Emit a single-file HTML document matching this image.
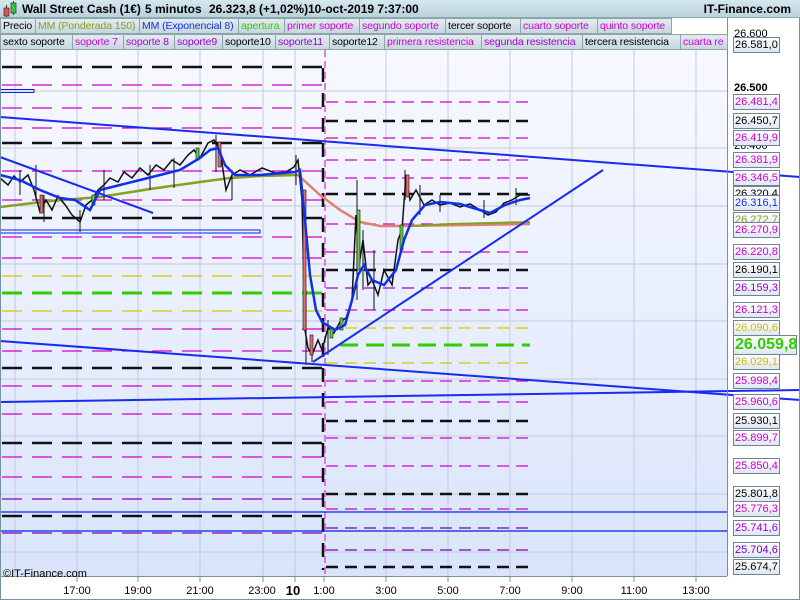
<!DOCTYPE html>
<html><head><meta charset="utf-8"><style>
*{margin:0;padding:0;box-sizing:border-box}
body{width:800px;height:600px;overflow:hidden;background:#fff;font-family:"Liberation Sans",sans-serif;position:relative}
#hdr{position:absolute;left:0;top:0;width:800px;height:18px;background:linear-gradient(#d6e7ee,#b9d2dc);border-bottom:1px solid #8aa;font-weight:bold;font-size:12px;line-height:18px;white-space:nowrap}
#hdr span{white-space:nowrap}
.leg{position:absolute;height:16px;font-size:10.5px;line-height:15px;background:linear-gradient(#e2ecf0,#c6d7de);border:1px solid #8fa3ad;white-space:nowrap;overflow:hidden;padding-left:2px;letter-spacing:-0.1px}
.lb{position:absolute;left:733px;width:47px;height:16px;font-size:11px;line-height:14px;border:1px solid #6f8593;background:linear-gradient(#fff,#dfe7f2);padding-left:1px;white-space:nowrap}
.pt{position:absolute;left:734px;font-size:11px}
.xl{position:absolute;top:585px;font-size:11px;transform:translateX(-50%)}
</style></head><body>
<svg width="800" height="600" style="position:absolute;left:0;top:0">
<defs><linearGradient id="bg" x1="0" y1="0" x2="0" y2="1"><stop offset="0" stop-color="#f8f9ff"/><stop offset="1" stop-color="#d9e4fb"/></linearGradient></defs>
<rect x="0" y="50" width="727" height="526" fill="url(#bg)"/>
<g stroke="#c3cada" stroke-width="1">
<line x1="15" y1="50" x2="15" y2="576"/><line x1="77" y1="50" x2="77" y2="576"/><line x1="138" y1="50" x2="138" y2="576"/><line x1="200" y1="50" x2="200" y2="576"/><line x1="263" y1="50" x2="263" y2="576"/><line x1="295" y1="50" x2="295" y2="576"/><line x1="386" y1="50" x2="386" y2="576"/><line x1="448" y1="50" x2="448" y2="576"/><line x1="510" y1="50" x2="510" y2="576"/><line x1="572" y1="50" x2="572" y2="576"/><line x1="634" y1="50" x2="634" y2="576"/><line x1="696" y1="50" x2="696" y2="576"/>
<line x1="0" y1="91" x2="727" y2="91"/><line x1="0" y1="148" x2="727" y2="148"/><line x1="0" y1="206" x2="727" y2="206"/><line x1="0" y1="264" x2="727" y2="264"/><line x1="0" y1="321" x2="727" y2="321"/><line x1="0" y1="379" x2="727" y2="379"/><line x1="0" y1="436" x2="727" y2="436"/><line x1="0" y1="494" x2="727" y2="494"/><line x1="0" y1="552" x2="727" y2="552"/>
</g>
<g stroke-dasharray="20,10" stroke="#111" stroke-width="2.5">
<line x1="2" y1="67" x2="322" y2="67"/><line x1="2" y1="143" x2="322" y2="143"/><line x1="2" y1="218" x2="322" y2="218"/><line x1="2" y1="368" x2="322" y2="368"/><line x1="2" y1="443" x2="322" y2="443"/><line x1="2" y1="516" x2="322" y2="516"/>
</g>
<g stroke-dasharray="20,10" stroke="#d000d0" stroke-width="1.2">
<line x1="2" y1="85" x2="322" y2="85"/><line x1="2" y1="108" x2="322" y2="108"/><line x1="2" y1="128" x2="322" y2="128"/><line x1="2" y1="171" x2="322" y2="171"/><line x1="2" y1="200" x2="322" y2="200"/><line x1="2" y1="237" x2="322" y2="237"/><line x1="2" y1="258" x2="322" y2="258"/><line x1="2" y1="329" x2="322" y2="329"/><line x1="2" y1="351" x2="322" y2="351"/><line x1="2" y1="386" x2="322" y2="386"/><line x1="2" y1="414" x2="322" y2="414"/><line x1="2" y1="457" x2="322" y2="457"/><line x1="2" y1="477" x2="322" y2="477"/>
<line x1="2" y1="499" x2="322" y2="499" stroke="#8000b0"/><line x1="2" y1="533" x2="322" y2="533" stroke="#8000b0"/>
</g>
<g stroke-dasharray="20,10" stroke="#d0c800" stroke-width="1.2"><line x1="2" y1="276" x2="322" y2="276"/><line x1="2" y1="311" x2="322" y2="311"/></g>
<line x1="2" y1="293" x2="322" y2="293" stroke="#33cc00" stroke-width="3" stroke-dasharray="20,10"/>
<g stroke-dasharray="12,7" stroke="#111" stroke-width="2.5">
<line x1="326" y1="121" x2="530" y2="121"/><line x1="326" y1="194" x2="530" y2="194"/><line x1="326" y1="270" x2="530" y2="270"/><line x1="326" y1="421" x2="530" y2="421"/><line x1="326" y1="494" x2="530" y2="494"/><line x1="326" y1="567" x2="530" y2="567"/>
</g>
<g stroke-dasharray="12,7" stroke="#d000d0" stroke-width="1.2">
<line x1="326" y1="102" x2="530" y2="102"/><line x1="326" y1="138" x2="530" y2="138"/><line x1="326" y1="160" x2="530" y2="160"/><line x1="326" y1="178" x2="530" y2="178"/><line x1="326" y1="224" x2="530" y2="224"/><line x1="326" y1="252" x2="530" y2="252"/><line x1="326" y1="288" x2="530" y2="288" stroke="#a000d0"/><line x1="326" y1="310" x2="530" y2="310"/><line x1="326" y1="381" x2="530" y2="381"/><line x1="326" y1="402" x2="530" y2="402"/><line x1="326" y1="438" x2="530" y2="438"/><line x1="326" y1="466" x2="530" y2="466"/><line x1="326" y1="509" x2="530" y2="509"/><line x1="326" y1="528" x2="530" y2="528" stroke="#8000b0"/><line x1="326" y1="550" x2="530" y2="550" stroke="#8000b0"/>
</g>
<g stroke-dasharray="12,7" stroke="#d0c800" stroke-width="1.2"><line x1="326" y1="328" x2="530" y2="328"/><line x1="326" y1="363" x2="530" y2="363"/></g>
<line x1="340" y1="345" x2="530" y2="345" stroke="#33cc00" stroke-width="3" stroke-dasharray="18,8"/>
<line x1="323" y1="68" x2="323" y2="570" stroke="#111" stroke-width="2.5" stroke-dasharray="14,11"/>
<line x1="325" y1="50" x2="325" y2="576" stroke="#dd55dd" stroke-width="1.5" stroke-dasharray="7,4"/>
<rect x="0" y="89.5" width="34" height="3" fill="none" stroke="#0022ee" stroke-width="1"/>
<rect x="0" y="230" width="260" height="3" fill="none" stroke="#0022ee" stroke-width="1"/>
<line x1="0" y1="512" x2="727" y2="512" stroke="#0022ee" stroke-width="1.2"/>
<line x1="0" y1="531" x2="727" y2="531" stroke="#0022ee" stroke-width="1.2"/>
<polyline fill="none" stroke="#88a020" stroke-width="2.5" points="0,207 50,201 100,197 150,189 200,182 230,178 260,176 298,175"/>
<polyline fill="none" stroke="#e08070" stroke-width="2.5" points="298,175 320,195 340,210 360,222 380,226 400,226 530,224"/>
<polyline fill="none" stroke="#88a020" stroke-width="2" points="410,226 450,224 530,222"/>
<g stroke="#111" stroke-width="1.5">
<polyline fill="none" points="0,178 8,185 14,176 20,182 28,175 34,190 40,212 46,200 52,210 58,196 66,206 72,215 80,222 86,205 92,200 98,190 104,185 110,178 118,182 124,172 132,178 140,168 148,175 156,165 164,170 172,160 180,165 188,155 194,150 200,158 208,143 214,140 220,150 226,190 232,175 240,170 250,175 262,168 275,173 286,172 294,167 298,160 302,200 305,330 308,348 312,355 318,340 322,350 328,328 334,333 340,322 346,318 352,300 356,215 359,265 363,240 368,285 372,280 378,295 384,270 392,285 398,240 402,230 406,175 410,200 416,190 424,205 432,200 440,205 450,203 460,207 470,204 480,210 488,215 496,212 504,203 512,200 520,195 530,195"/>
<path stroke-width="1" d="M20,170V195M36,165V200M44,195V222M80,210V232M104,170V200M150,165V190M174,158V188M216,135V172M232,170V200M296,155V185M306,290V365M312,340V362M328,320V355M357,180V300M363,230V290M374,250V310M405,170V200M420,185V215M440,195V212M484,200V218M516,188V205"/>
</g>
<g fill="#66cc44" stroke="#111" stroke-width=".6"><rect x="196" y="148" width="3" height="12"/><rect x="357" y="210" width="3" height="60"/><rect x="400" y="225" width="3" height="25"/><rect x="92" y="195" width="3" height="10"/><rect x="340" y="318" width="3" height="12"/><rect x="330" y="328" width="3" height="10"/></g>
<g fill="#e07070" stroke="#111" stroke-width=".6"><rect x="303" y="190" width="3" height="140"/><rect x="218" y="142" width="3" height="25"/><rect x="406" y="175" width="3" height="22"/><rect x="40" y="195" width="3" height="18"/><rect x="310" y="335" width="3" height="20"/></g>
<polyline fill="none" stroke="#1030e8" stroke-width="2.5" points="0,175 20,180 40,190 60,198 75,200 90,210 100,190 120,185 140,180 160,175 180,170 200,158 210,150 218,148 225,165 235,175 260,175 295,172 300,170 305,220 310,275 316,310 322,322 335,330 345,325 352,300 358,275 364,265 372,280 384,285 396,270 404,240 412,220 425,205 440,202 460,204 480,210 490,213 505,205 520,200 530,198"/>
<g stroke="#1a2af0" stroke-width="2">
<line x1="0" y1="117" x2="800" y2="177"/>
<line x1="0" y1="157" x2="153" y2="213"/>
<line x1="313" y1="362" x2="603" y2="170"/>
<line x1="0" y1="341" x2="800" y2="400"/>
<line x1="0" y1="402" x2="800" y2="390"/>
</g>
<line x1="727.5" y1="18" x2="727.5" y2="576" stroke="#7890a0"/>
<line x1="0" y1="576.5" x2="727" y2="576.5" stroke="#7890a0"/>
<line x1="0.5" y1="18" x2="0.5" y2="600" stroke="#7890a0"/>
<line x1="799.5" y1="18" x2="799.5" y2="600" stroke="#7890a0"/>
<line x1="0" y1="599.5" x2="800" y2="599.5" stroke="#7890a0"/>
<g stroke="#7890a0"><line x1="77" y1="577" x2="77" y2="582"/><line x1="138" y1="577" x2="138" y2="582"/><line x1="200" y1="577" x2="200" y2="582"/><line x1="263" y1="577" x2="263" y2="582"/><line x1="295" y1="577" x2="295" y2="582"/><line x1="324" y1="577" x2="324" y2="582"/><line x1="386" y1="577" x2="386" y2="582"/><line x1="448" y1="577" x2="448" y2="582"/><line x1="510" y1="577" x2="510" y2="582"/><line x1="572" y1="577" x2="572" y2="582"/><line x1="634" y1="577" x2="634" y2="582"/><line x1="696" y1="577" x2="696" y2="582"/></g>
</svg>
<div id="hdr"><span style="position:absolute;left:22px">Wall Street Cash (1€)</span><span style="position:absolute;left:145px">5 minutos</span><span style="position:absolute;left:209px">26.323,8 (+1,02%)</span><span style="position:absolute;left:308px">10-oct-2019 7:37:00</span><span style="position:absolute;right:9px">IT-Finance.com</span>
<svg width="20" height="18" style="position:absolute;left:0;top:0"><line x1="6.5" y1="5" x2="6.5" y2="17" stroke="#333"/><rect x="4" y="8" width="5" height="8" fill="#e05050" stroke="#333" stroke-width=".7"/><line x1="13.5" y1="1" x2="13.5" y2="15" stroke="#333"/><rect x="11" y="3" width="5" height="10" fill="#40c040" stroke="#333" stroke-width=".7"/></svg></div>
<div class="leg" style="left:0;top:18px;width:36px">Precio</div>
<div class="leg" style="left:35px;top:18px;width:105px;color:#88a020">MM (Ponderada 150)</div>
<div class="leg" style="left:139px;top:18px;width:100px;color:#1030e8">MM (Exponencial 8)</div>
<div class="leg" style="left:238px;top:18px;width:47px;color:#33cc00">apertura</div>
<div class="leg" style="left:284px;top:18px;width:76px;color:#d000d0">primer soporte</div>
<div class="leg" style="left:359px;top:18px;width:87px;color:#d000d0">segundo soporte</div>
<div class="leg" style="left:445px;top:18px;width:76px">tercer soporte</div>
<div class="leg" style="left:520px;top:18px;width:78px;color:#d000d0">cuarto soporte</div>
<div class="leg" style="left:597px;top:18px;width:75px;color:#d000d0">quinto soporte</div>
<div class="leg" style="left:0;top:34px;width:73px">sexto soporte</div>
<div class="leg" style="left:72px;top:34px;width:52px;color:#d000d0">soporte 7</div>
<div class="leg" style="left:123px;top:34px;width:52px;color:#b000d0">soporte 8</div>
<div class="leg" style="left:174px;top:34px;width:49px;color:#a000d0">soporte9</div>
<div class="leg" style="left:222px;top:34px;width:54px">soporte10</div>
<div class="leg" style="left:275px;top:34px;width:55px;color:#a000d0">soporte11</div>
<div class="leg" style="left:329px;top:34px;width:56px">soporte12</div>
<div class="leg" style="left:384px;top:34px;width:98px;color:#d000d0">primera resistencia</div>
<div class="leg" style="left:481px;top:34px;width:102px;color:#a000d0">segunda resistencia</div>
<div class="leg" style="left:582px;top:34px;width:99px">tercera resistencia</div>
<div class="leg" style="left:680px;top:34px;width:48px;color:#d000d0">cuarta re</div>
<div class="pt" style="top:28px">26.600</div>
<div class="pt" style="top:82px;font-weight:bold">26.500</div>
<div class="pt" style="top:140px">26.400</div>
<div class="lb" style="top:37px">26.581,0</div>
<div class="lb" style="top:94px;color:#d000d0">26.481,4</div>
<div class="lb" style="top:113px">26.450,7</div>
<div class="lb" style="top:130px;color:#d000d0">26.419,9</div>
<div class="lb" style="top:152px;color:#d000d0">26.381,9</div>
<div class="lb" style="top:170px;color:#d000d0">26.346,5</div>
<div class="lb" style="top:186px">26.320,4</div>
<div class="lb" style="top:195px;color:#1030e8">26.316,1</div>
<div class="lb" style="top:212px;color:#88a020">26.272,7</div>
<div class="lb" style="top:222px;color:#d000d0">26.270,9</div>
<div class="lb" style="top:244px;color:#d000d0">26.220,8</div>
<div class="lb" style="top:262px">26.190,1</div>
<div class="lb" style="top:280px;color:#a000d0">26.159,3</div>
<div class="lb" style="top:302px;color:#d000d0">26.121,3</div>
<div class="lb" style="top:320px;color:#c8c000">26.090,6</div>
<div class="lb" style="top:335px;height:20px;width:64px;font-size:16px;line-height:18px;font-weight:bold;color:#33cc00">26.059,8</div>
<div class="lb" style="top:354px;color:#c8c000">26.029,1</div>
<div class="lb" style="top:373px;color:#d000d0">25.998,4</div>
<div class="lb" style="top:394px;color:#d000d0">25.960,6</div>
<div class="lb" style="top:413px">25.930,1</div>
<div class="lb" style="top:430px;color:#d000d0">25.899,7</div>
<div class="lb" style="top:458px;color:#d000d0">25.850,4</div>
<div class="lb" style="top:486px">25.801,8</div>
<div class="lb" style="top:501px;color:#d000d0">25.776,3</div>
<div class="lb" style="top:520px;color:#a000d0">25.741,6</div>
<div class="lb" style="top:542px;color:#8000b0">25.704,6</div>
<div class="lb" style="top:559px">25.674,7</div>
<div style="position:absolute;left:3px;top:568px;font-size:11px">©IT-Finance.com</div>
<div class="xl" style="left:77px">17:00</div><div class="xl" style="left:138px">19:00</div><div class="xl" style="left:200px">21:00</div><div class="xl" style="left:262px">23:00</div><div class="xl" style="left:293px;font-weight:bold;font-size:13px;top:583px">10</div><div class="xl" style="left:324px">1:00</div><div class="xl" style="left:386px">3:00</div><div class="xl" style="left:448px">5:00</div><div class="xl" style="left:510px">7:00</div><div class="xl" style="left:572px">9:00</div><div class="xl" style="left:634px">11:00</div><div class="xl" style="left:696px">13:00</div>
</body></html>
